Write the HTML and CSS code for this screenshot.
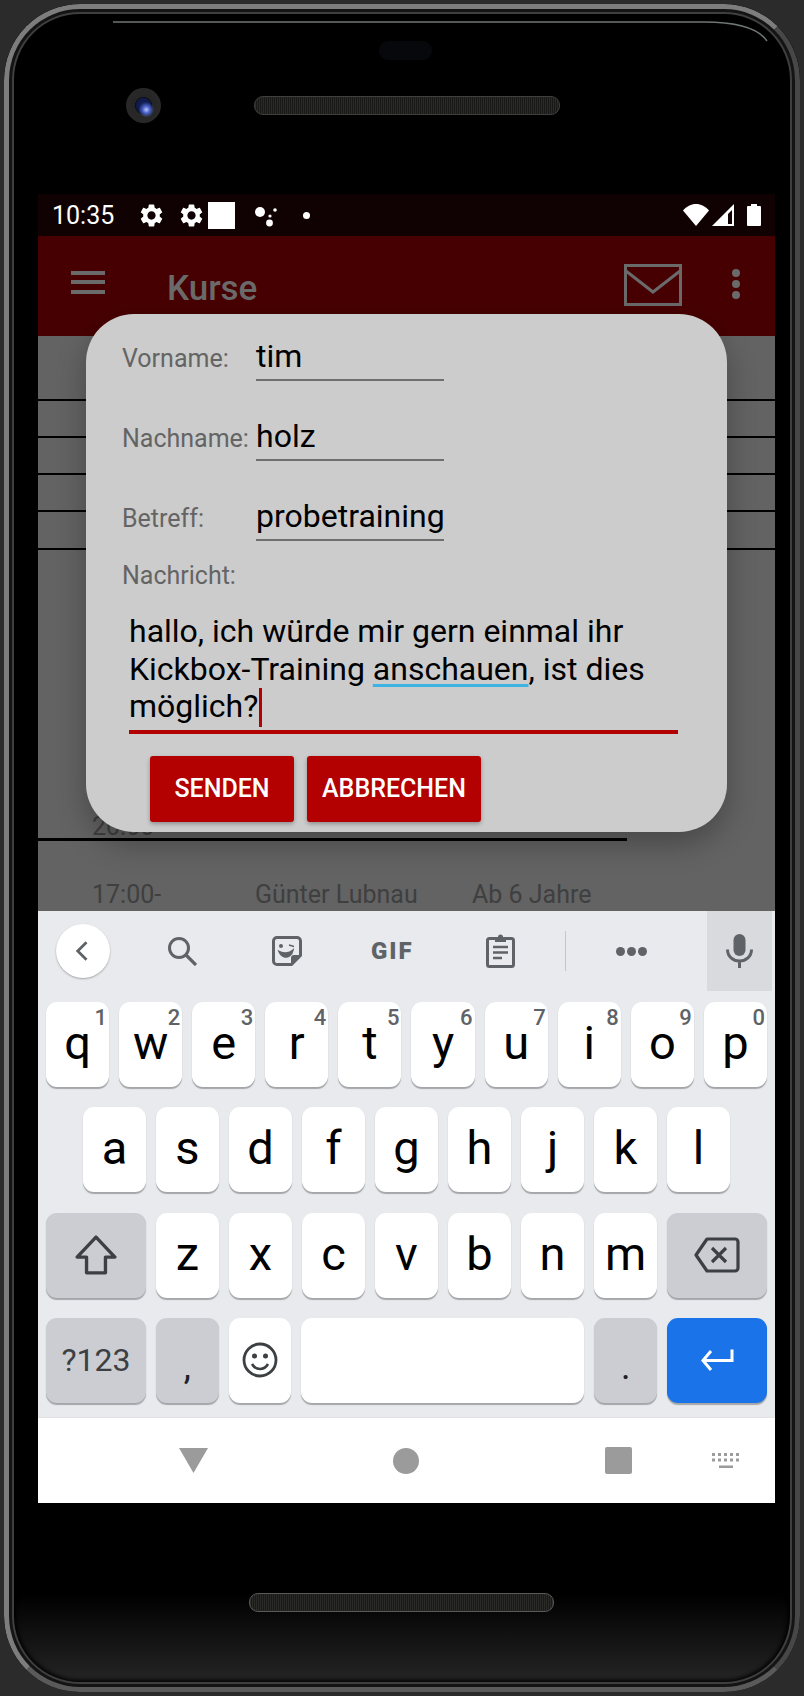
FILE: index.html
```html
<!DOCTYPE html>
<html lang="de">
<head>
  <meta charset="UTF-8" />
  <title>Kurse</title>
  <link rel="stylesheet" href="styles.css">
</head>
<body>
  <div class="phone">
    <div class="edge"></div>
    <svg class="glint" viewBox="0 0 796 40" width="796" height="40"><path d="M109 18H700Q750 18 763 37" fill="none" stroke="#6e7676" stroke-width="1.500"/></svg>
    <div class="bezel-top">
      <div class="earpiece"></div>
      <div class="bezel-row">
        <div class="camera"></div>
        <div class="speaker"></div>
      </div>
    </div>

    <div class="screen">
      <div class="statusbar">
        <span class="time">10:35</span>
        <svg class="gear gear-one" viewBox="2 2 20 20"><path d="M19.14 12.94c.04-.3.06-.61.06-.94 0-.32-.02-.64-.07-.94l2.03-1.58a.49.49 0 0 0 .12-.61l-1.92-3.32a.488.488 0 0 0-.59-.22l-2.39.96c-.5-.38-1.03-.7-1.62-.94l-.36-2.54a.484.484 0 0 0-.48-.41h-3.84c-.24 0-.43.17-.47.41l-.36 2.54c-.59.24-1.13.57-1.62.94l-2.39-.96c-.22-.08-.47 0-.59.22L2.74 8.87c-.12.21-.08.47.12.61l2.03 1.58c-.05.3-.09.63-.09.94s.02.64.07.94l-2.03 1.58a.49.49 0 0 0-.12.61l1.92 3.32c.12.22.37.29.59.22l2.39-.96c.5.38 1.03.7 1.62.94l.36 2.54c.05.24.24.41.48.41h3.84c.24 0 .44-.17.47-.41l.36-2.54c.59-.24 1.13-.56 1.62-.94l2.39.96c.22.08.47 0 .59-.22l1.92-3.32c.12-.22.07-.47-.12-.61l-2.01-1.58zM12 15.6c-1.98 0-3.6-1.62-3.6-3.6s1.62-3.6 3.6-3.6 3.6 1.62 3.6 3.6-1.62 3.6-3.6 3.6z"/></svg>
        <svg class="gear gear-two" viewBox="2 2 20 20"><path d="M19.14 12.94c.04-.3.06-.61.06-.94 0-.32-.02-.64-.07-.94l2.03-1.58a.49.49 0 0 0 .12-.61l-1.92-3.32a.488.488 0 0 0-.59-.22l-2.39.96c-.5-.38-1.03-.7-1.62-.94l-.36-2.54a.484.484 0 0 0-.48-.41h-3.84c-.24 0-.43.17-.47.41l-.36 2.54c-.59.24-1.13.57-1.62.94l-2.39-.96c-.22-.08-.47 0-.59.22L2.74 8.87c-.12.21-.08.47.12.61l2.03 1.58c-.05.3-.09.63-.09.94s.02.64.07.94l-2.03 1.58a.49.49 0 0 0-.12.61l1.92 3.32c.12.22.37.29.59.22l2.39-.96c.5.38 1.03.7 1.62.94l.36 2.54c.05.24.24.41.48.41h3.84c.24 0 .44-.17.47-.41l.36-2.54c.59-.24 1.13-.56 1.62-.94l2.39.96c.22.08.47 0 .59-.22l1.92-3.32c.12-.22.07-.47-.12-.61l-2.01-1.58zM12 15.6c-1.98 0-3.6-1.62-3.6-3.6s1.62-3.6 3.6-3.6 3.6 1.62 3.6 3.6-1.62 3.6-3.6 3.6z"/></svg>
        <div class="white-box"></div>
        <svg class="assistant" viewBox="0 0 24 24"><circle cx="6" cy="9" r="5"/><circle cx="21" cy="7" r="1.800"/><circle cx="16" cy="13" r="1.600"/><circle cx="15.500" cy="20" r="3.400"/></svg>
        <div class="dot"></div>
        <div class="status-right">
          <svg class="wifi" viewBox="0 0 26 22"><path d="M13 22 0 6.500C3.500 2.500 8 0 13 0s9.500 2.500 13 6.500z"/></svg>
          <svg class="signal" viewBox="0 0 22 22"><path fill-rule="evenodd" d="M22 0v22H0zM20 6 16 10v10h4z"/></svg>
          <svg class="battery" viewBox="0 0 14 22"><path d="M4 0h6v2h3a1 1 0 0 1 1 1v18a1 1 0 0 1-1 1H1a1 1 0 0 1-1-1V3a1 1 0 0 1 1-1h3z"/></svg>
        </div>
      </div>

      <div class="appbar">
        <div class="burger"><i></i><i></i><i></i></div>
        <span class="title">Kurse</span>
        <svg class="mail" viewBox="0 0 58 42"><rect x="1.500" y="1.500" width="55" height="39" fill="none" stroke="#6a6a6a" stroke-width="3"/><path d="M2 7 29 28 56 7" fill="none" stroke="#6a6a6a" stroke-width="3"/></svg>
        <div class="more"><i></i><i></i><i></i></div>
      </div>

      <div class="content">
        <div class="row row-first"></div>
        <div class="row"></div>
        <div class="row"></div>
        <div class="row"></div>
        <div class="row row-tall"></div>
        <div class="row row-time"><span class="cell-time">20:00</span></div>
        <div class="course">
          <span class="cell-time">17:00-</span>
          <span class="cell-name">Günter Lubnau</span>
          <span>Ab 6 Jahre</span>
        </div>
      </div>

      <div class="dialog">
        <div class="field">
          <span class="label">Vorname:</span>
          <span class="input">tim</span>
        </div>
        <div class="field field-gap">
          <span class="label">Nachname:</span>
          <span class="input">holz</span>
        </div>
        <div class="field field-gap">
          <span class="label">Betreff:</span>
          <span class="input">probetraining</span>
        </div>
        <div class="label message-label">Nachricht:</div>
        <div class="message">hallo, ich würde mir gern einmal ihr<br>Kickbox-Training <span class="spell">anschauen</span>, ist dies<br>möglich?<span class="caret"></span></div>
        <div class="actions">
          <button class="btn btn-send">SENDEN</button>
          <button class="btn btn-cancel">ABBRECHEN</button>
        </div>
      </div>

      <div class="keyboard">
        <div class="toolbar">
          <div class="back">
            <svg viewBox="0 0 24 24" width="28" height="28"><path d="M15 4.500 7.500 12l7.500 7.500" fill="none" stroke="#5f6368" stroke-width="2.400"/></svg>
          </div>
          <svg class="tool tool-search" viewBox="0 0 30 30"><circle cx="12" cy="12" r="9.500" fill="none" stroke="#5f6368" stroke-width="3"/><path d="m19 19 10 10" stroke="#5f6368" stroke-width="3.200"/></svg>
          <svg class="tool tool-sticker" viewBox="0 0 30 30"><path d="M5 1.500h20a3.500 3.500 0 0 1 3.500 3.500v14.500l-9 9H5A3.500 3.500 0 0 1 1.500 25V5A3.500 3.500 0 0 1 5 1.500z" fill="none" stroke="#5f6368" stroke-width="3"/><path d="M19 28v-6a3 3 0 0 1 3-3h6z" fill="#5f6368"/><circle cx="9" cy="10" r="2" fill="#5f6368"/><path d="m17 9 5 1.500M7 15.500c4 2.500 10 2 14-1.500-1 5-5 7.500-8 7-3-.5-5-3-6-5.500z" fill="#5f6368" stroke="#5f6368" stroke-width="1.500"/></svg>
          <span class="gif">GIF</span>
          <svg class="tool tool-clip" viewBox="0 0 29 34"><rect x="1.500" y="4.500" width="26" height="28" rx="2" fill="none" stroke="#5f6368" stroke-width="3"/><path d="M9 3h3a2.500 2.500 0 0 1 5 0h3v5H9z" fill="#5f6368"/><path d="M7 13h15M7 18.500h15M7 24h9" stroke="#5f6368" stroke-width="2.600"/></svg>
          <div class="tool-divider"></div>
          <div class="tool-dots"><i></i><i></i><i></i></div>
          <div class="mic">
            <svg viewBox="0 0 27 34" width="27" height="34"><rect x="7.500" y="0" width="12" height="22" rx="6" fill="#5f6368"/><path d="M1.500 15.500c0 7 5.500 11.500 12 11.500s12-4.500 12-11.500M13.500 27v7" fill="none" stroke="#5f6368" stroke-width="3"/></svg>
          </div>
        </div>

        <div class="keys">
          <div class="key-row">
            <div class="key">q<span class="hint">1</span></div>
            <div class="key">w<span class="hint">2</span></div>
            <div class="key">e<span class="hint">3</span></div>
            <div class="key">r<span class="hint">4</span></div>
            <div class="key">t<span class="hint">5</span></div>
            <div class="key">y<span class="hint">6</span></div>
            <div class="key">u<span class="hint">7</span></div>
            <div class="key">i<span class="hint">8</span></div>
            <div class="key">o<span class="hint">9</span></div>
            <div class="key">p<span class="hint">0</span></div>
          </div>
          <div class="key-row key-row-home">
            <div class="key">a</div>
            <div class="key">s</div>
            <div class="key">d</div>
            <div class="key">f</div>
            <div class="key">g</div>
            <div class="key">h</div>
            <div class="key">j</div>
            <div class="key">k</div>
            <div class="key">l</div>
          </div>
          <div class="key-row">
            <div class="key key-wide key-gray">
              <svg viewBox="0 0 40 38" width="42" height="40"><path d="M20 2 38 21H29V36H11V21H2z" fill="none" stroke="#3c4043" stroke-width="3.200" stroke-linejoin="round"/></svg>
            </div>
            <div class="key">z</div>
            <div class="key">x</div>
            <div class="key">c</div>
            <div class="key">v</div>
            <div class="key">b</div>
            <div class="key">n</div>
            <div class="key">m</div>
            <div class="key key-wide key-gray">
              <svg viewBox="0 0 46 36" width="46" height="36"><path d="M13 2h28a3 3 0 0 1 3 3v26a3 3 0 0 1-3 3H13L2 18z" fill="none" stroke="#3c4043" stroke-width="3.200" stroke-linejoin="round"/><path d="m18 11 14 14M32 11 18 25" stroke="#3c4043" stroke-width="3.200"/></svg>
            </div>
          </div>
          <div class="key-row">
            <div class="key key-wide key-gray key-sym">?123</div>
            <div class="key key-gray key-punct">,</div>
            <div class="key">
              <svg viewBox="0 0 36 36" width="36" height="36"><circle cx="18" cy="18" r="16" fill="none" stroke="#3c4043" stroke-width="2.800"/><circle cx="12.500" cy="14" r="2.500" fill="#3c4043"/><circle cx="23.500" cy="14" r="2.500" fill="#3c4043"/><path d="M10 22c2 3.500 5 5 8 5s6-1.500 8-5" fill="none" stroke="#3c4043" stroke-width="2.600"/></svg>
            </div>
            <div class="key key-space"></div>
            <div class="key key-gray key-punct">.</div>
            <div class="key key-wide key-enter">
              <svg viewBox="0 0 34 24" width="34" height="24"><path d="M32 1.500v11H4M11 3 3 12.500 11 22" fill="none" stroke="#fff" stroke-width="3"/></svg>
            </div>
          </div>
        </div>
      </div>

      <div class="navbar">
        <svg class="nav-back" viewBox="0 0 29 25"><path d="M0 0h29L14.500 25z" fill="#9b9b9b"/></svg>
        <div class="nav-home"></div>
        <div class="nav-recent"></div>
        <svg class="nav-kbd" viewBox="0 0 27 15"><path fill="#9b9b9b" d="M0 0h3v3H0zM6 0h3v3H6zM12 0h3v3h-3zM18 0h3v3h-3zM24 0h3v3h-3zM0 5.500h3v3H0zM6 5.500h3v3H6zM12 5.500h3v3h-3zM18 5.500h3v3h-3zM24 5.500h3v3h-3zM7 12.500h14V15H7z"/></svg>
      </div>
    </div>

    <div class="bezel-bottom">
      <div class="speaker speaker-bottom"></div>
    </div>
  </div>
</body>
</html>
```

FILE: styles.css
```css
* { box-sizing: border-box; }
html, body { margin: 0; padding: 0; }
body {
  width: 804px;
  height: 1696px;
  background: #2b2b2b;
  font-family: Roboto, sans-serif;
  overflow: hidden;
}

/* device frame */
.phone {
  position: relative;
  width: 796px;
  height: 1688px;
  margin: 4px;
  padding: 0 25px 0 34px;
  border-radius: 76px;
  background: linear-gradient(to bottom, #000 1590px, #262626 1680px);
  overflow: hidden;
}
.edge {
  position: absolute;
  inset: 0;
  border-radius: 76px;
  border: 5px solid #7d7d7d;
  border-bottom-color: #5a5a5a;
  border-right-color: #474747;
  box-shadow: inset 0 0 0 3px #141414, inset 0 0 0 5px #3f3f3f, inset 0 0 4px 7px #000;
  pointer-events: none;
}
.glint { position: absolute; top: 0; left: 0; }
.bezel-top { height: 190px; padding-top: 37px; }
.earpiece {
  width: 53px;
  height: 19px;
  margin-left: 341px;
  border-radius: 9px;
  background: #07080b;
}
.bezel-row {
  display: flex;
  align-items: center;
  margin-top: 28px;
}
.camera {
  width: 35px;
  height: 35px;
  margin-left: 88px;
  border-radius: 50%;
  background:
    radial-gradient(circle at 58% 62%, #b9c6ff 0, #4a62c8 12%, rgba(30, 45, 120, 0) 26%),
    radial-gradient(circle at 50% 50%, #16225e 0, #101a45 30%, #0b0b10 33%, #262626 36%, #2a2a2a 90%, #000 100%);
}
.speaker {
  width: 306px;
  height: 19px;
  margin-left: 93px;
  border-radius: 9px;
  border: 1.500px solid #3f3f3d;
  background: repeating-linear-gradient(90deg, #2a2a28 0 1px, #191917 1px 2px);
}
.bezel-bottom { height: 188px; padding-top: 90px; }
.speaker-bottom {
  width: 305px;
  margin-left: 211px;
  border-color: #5a5a58;
}

.screen {
  position: relative;
  width: 737px;
  height: 1309px;
  background: #636363;
  overflow: hidden;
}

/* status bar */
.statusbar {
  display: flex;
  align-items: center;
  height: 42px;
  padding-left: 14px;
  background: #100203;
  color: #fff;
}
.time { font-size: 25px; width: 88px; }
.statusbar svg { fill: #fff; display: block; }
.gear { width: 23px; height: 23px; }
.gear-two { margin-left: 17px; }
.white-box { width: 27px; height: 27px; margin-left: 5px; background: #fff; }
.assistant { width: 24px; height: 24px; margin-left: 19px; }
.dot { width: 7px; height: 7px; margin-left: 25px; border-radius: 50%; background: #fff; }
.status-right { display: flex; align-items: center; margin-left: auto; padding-right: 14px; }
.wifi { width: 26px; height: 22px; }
.signal { width: 22px; height: 22px; margin-left: 3px; }
.battery { width: 14px; height: 22px; margin-left: 13px; }

/* app bar */
.appbar {
  display: flex;
  align-items: center;
  height: 100px;
  background: #470002;
  padding-bottom: 2px;
}
.burger { margin-left: 33px; width: 34px; }
.burger i { display: block; height: 4px; margin-bottom: 5.500px; background: #6a6a6a; }
.title {
  margin: 6px 0 0 62px;
  font-size: 35px;
  font-weight: 500;
  color: #6a6a6a;
}
.mail { width: 58px; height: 42px; margin-left: 367px; }
.more { margin-left: 50px; }
.more i { display: block; width: 8px; height: 8px; margin-bottom: 3px; border-radius: 50%; background: #6a6a6a; }

/* dimmed list behind the dialog */
.content {
  height: 575px;
  overflow: hidden;
  color: #3f3f3f;
  font-size: 25px;
}
.row { height: 37px; border-bottom: 2px solid #000; }
.row-first { height: 65px; }
.row-tall { height: 38px; }
.row-time {
  width: 589px;
  height: 291px;
  padding: 264px 0 0 54px;
  line-height: 26px;
  border-bottom-width: 3px;
}
.course {
  display: flex;
  margin-top: 40px;
  line-height: 27px;
}
.course .cell-time { width: 163px; margin-left: 54px; }
.cell-name { width: 217px; }

/* dialog */
.dialog {
  position: absolute;
  top: 120px;
  left: 48px;
  width: 641px;
  height: 518px;
  padding: 22px 0 0 36px;
  border-radius: 48px;
  background: #cccccc;
  box-shadow: 0 12px 30px rgba(0, 0, 0, 0.28);
}
.field { display: flex; align-items: baseline; }
.field-gap { margin-top: 35px; }
.label { width: 134px; font-size: 25px; color: #646464; }
.input {
  width: 188px;
  padding-bottom: 3px;
  border-bottom: 2px solid #6f6f6f;
  font-size: 32px;
  line-height: 40px;
  color: #000;
  white-space: nowrap;
}
.message-label { margin-top: 20px; width: auto; }
.message {
  width: 549px;
  margin: 23px 0 0 7px;
  padding-bottom: 4px;
  border-bottom: 4px solid #b30000;
  font-size: 32px;
  line-height: 37.500px;
  color: #000;
  white-space: nowrap;
}
.spell {
  text-decoration: underline #3db3e3 3px;
  text-decoration-skip-ink: none;
  text-underline-offset: 4px;
}
.caret {
  display: inline-block;
  width: 3px;
  height: 39px;
  margin: 0 0 -10px 1px;
  background: #b30000;
}
.actions { display: flex; gap: 13px; margin: 22px 0 0 28px; }
.btn {
  height: 66px;
  padding: 0;
  border: none;
  border-radius: 3px;
  background: #b30000;
  color: #fff;
  font-family: Roboto, sans-serif;
  font-size: 25px;
  font-weight: 500;
  box-shadow: 0 2px 4px rgba(0, 0, 0, 0.3);
}
.btn-send { width: 144px; }
.btn-cancel { width: 174px; }

/* keyboard */
.keyboard { height: 506px; background: #e8eaed; }
.toolbar { display: flex; align-items: center; height: 80px; }
.back {
  display: flex;
  align-items: center;
  justify-content: center;
  width: 54px;
  height: 54px;
  margin-left: 18px;
  border-radius: 50%;
  background: #fff;
  box-shadow: 0 1px 2px rgba(0, 0, 0, 0.3);
}
.tool { display: block; flex: none; }
.tool-search { width: 30px; height: 30px; margin-left: 57px; }
.tool-sticker { width: 30px; height: 30px; margin-left: 75px; }
.gif {
  width: 46px;
  margin-left: 69px;
  font-size: 24px;
  font-weight: 900;
  letter-spacing: 2px;
  color: #5f6368;
}
.tool-clip { width: 29px; height: 34px; margin-left: 69px; }
.tool-divider { width: 1px; height: 40px; margin-left: 50px; background: #c4c6c9; }
.tool-dots { display: flex; gap: 2px; margin-left: 50px; }
.tool-dots i { width: 9px; height: 9px; border-radius: 50%; background: #5f6368; }
.mic {
  display: flex;
  align-items: center;
  justify-content: center;
  width: 65px;
  height: 80px;
  margin-left: 60px;
  background: #d8dadd;
}
.keys {
  display: flex;
  flex-direction: column;
  gap: 20.300px;
  padding: 11px 8px 0 8px;
}
.key-row { display: flex; gap: 10px; height: 85px; }
.key-row-home { padding: 0 37px; }
.key {
  position: relative;
  display: flex;
  align-items: center;
  justify-content: center;
  flex: 1;
  padding-bottom: 4px;
  border-radius: 11px;
  background: #fff;
  color: #000;
  font-size: 47px;
  box-shadow: 0 1.500px 1px #a4a6a9;
}
.key svg { margin-top: 4px; }
.hint {
  position: absolute;
  top: 3px;
  right: 2px;
  font-size: 22px;
  font-weight: 500;
  line-height: 26px;
  color: #5f6368;
}
.key-wide { flex: none; width: 100px; }
.key-gray { background: #cbcdd3; color: #3c4043; }
.key-sym { font-size: 32px; padding-bottom: 0; }
.key-punct { font-size: 36px; color: #202124; padding: 14px 0 0; }
.key-space { flex: none; width: 283px; }
.key-enter { background: #1a73e8; }

/* nav bar */
.navbar {
  display: flex;
  align-items: center;
  height: 86px;
  background: #fff;
  border-top: 1px solid #e2e3e5;
}
.nav-back { width: 29px; height: 25px; margin-left: 141px; }
.nav-home { width: 26px; height: 26px; margin-left: 185px; border-radius: 50%; background: #9b9b9b; }
.nav-recent { width: 27px; height: 27px; margin-left: 186px; border-radius: 2px; background: #9b9b9b; }
.nav-kbd { width: 27px; height: 15px; margin-left: 80px; }
```
